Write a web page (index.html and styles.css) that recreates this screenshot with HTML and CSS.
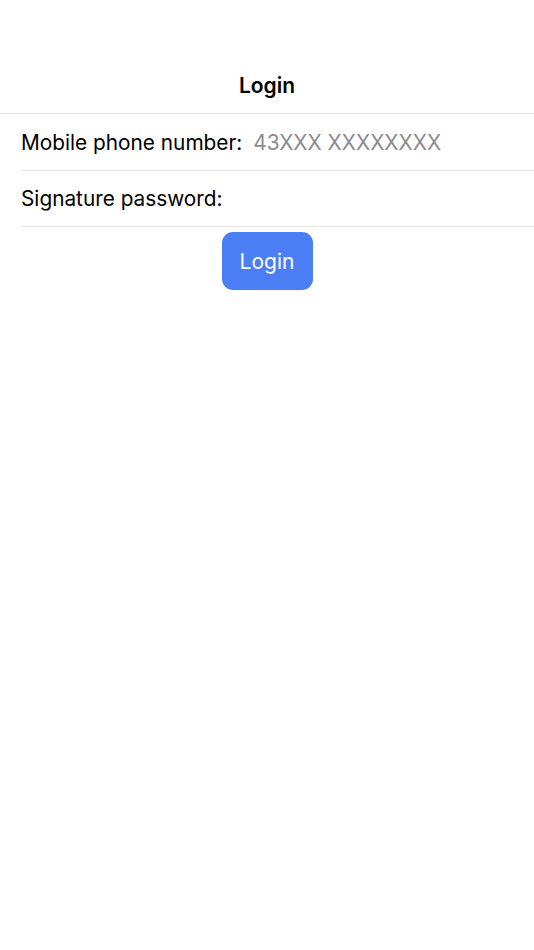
FILE: index.html
```html
<!DOCTYPE html>
<html>
<head>
<meta charset="utf-8">
<link rel="stylesheet" href="styles.css">
</head>
<body>
<div class="page">
  <header class="navbar"><h1 class="title">Login</h1></header>
  <form class="form">
    <div class="row">
      <label class="label">Mobile phone number:</label>
      <span class="placeholder">43XXX XXXXXXXX</span>
    </div>
    <div class="row">
      <label class="label">Signature password:</label>
    </div>
    <div class="actions">
      <button type="button" class="btn">Login</button>
    </div>
  </form>
</div>
</body>
</html>
```
FILE: styles.css
```css
html, body { margin: 0; padding: 0; background: #fff; }
body { font-family: "Inter", "Liberation Sans", sans-serif; color: #000; }
.page { width: 534px; min-height: 950px; }
.navbar { height: 114px; box-sizing: border-box; padding-top: 58px; border-bottom: 1px solid #e2e2e4; display: flex; justify-content: center; align-items: flex-start; }
.title { margin: 0; font-size: 21px; font-weight: 600; line-height: 56px; height: 55px; }
.form { padding-left: 21px; }
.row { height: 56px; border-bottom: 1px solid #e2e2e4; display: flex; align-items: center; font-size: 20.8px; }
.row + .row { height: 55px; }
.label { margin-right: 11px; }
.placeholder { color: #8b8b8e; }
.actions { display: flex; justify-content: center; padding-top: 5px; margin-left: -21px; }
.btn { width: 91px; height: 58px; border: none; border-radius: 11px; background: #4b7ef4; color: #fff; font-family: inherit; font-size: 21px; padding: 0; }
```
